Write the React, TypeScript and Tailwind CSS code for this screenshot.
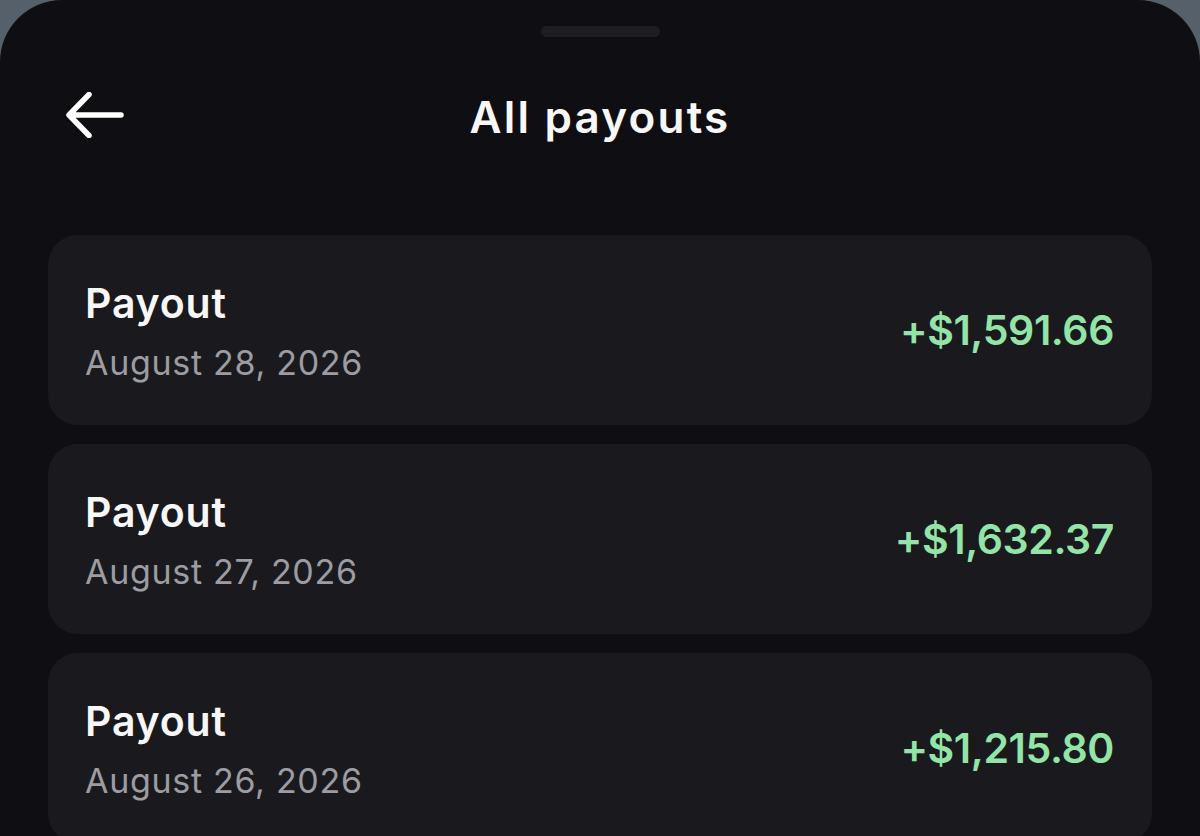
import React from 'react'

type Payout = {
  date: string
  amount: string
}

const payouts: Payout[] = [
  { date: 'August 28, 2026', amount: '+$1,591.66' },
  { date: 'August 27, 2026', amount: '+$1,632.37' },
  { date: 'August 26, 2026', amount: '+$1,215.80' },
]

const BackArrow = () => (
  <svg width="58" height="46" viewBox="0 0 58 46" fill="none">
    <path
      d="M23 2.5 L3 23 L23 43.5 M3.5 23 H55"
      stroke="#ffffff"
      strokeWidth="5.5"
      strokeLinecap="round"
      strokeLinejoin="round"
    />
  </svg>
)

const PayoutRow = ({ date, amount }: Payout) => (
  <div className="flex h-[190px] shrink-0 items-center justify-between rounded-[30px] bg-[#1a1a1e] pl-[37px] pr-[38px]">
    <div className="flex flex-col pt-[4px]">
      <span className="text-[41px] font-semibold leading-[48px] tracking-[0.8px] text-[#f7f7f7]">Payout</span>
      <span className="mt-[14px] text-[34px] leading-[44px] tracking-[0.7px] text-[#9c9ca2]">{date}</span>
    </div>
    <span className="text-[41px] font-semibold leading-[48px] tracking-[-0.4px] text-[#92e5a7]">{amount}</span>
  </div>
)

export default function App() {
  return (
    <div className="h-[836px] w-[1200px] overflow-hidden bg-[#56606a]" style={{ fontFamily: 'Inter, "Noto Sans", sans-serif' }}>
      <div className="h-full rounded-t-[62px] bg-[#0f0f13] pt-[26px]">
        <div className="mx-auto h-[11px] w-[119px] rounded-full bg-[#1d1d22]" />
        <div className="relative mt-[39px] flex h-[78px] items-center justify-center">
          <button className="absolute left-[66px] top-[16px]">
            <BackArrow />
          </button>
          <h1 className="pt-[4px] text-[44px] font-semibold tracking-[2.2px] text-[#f7f7f7]">All payouts</h1>
        </div>
        <div className="mx-[48px] mt-[81px] flex flex-col gap-[19px]">
          {payouts.map((p) => (
            <PayoutRow key={p.date} {...p} />
          ))}
        </div>
      </div>
    </div>
  )
}
